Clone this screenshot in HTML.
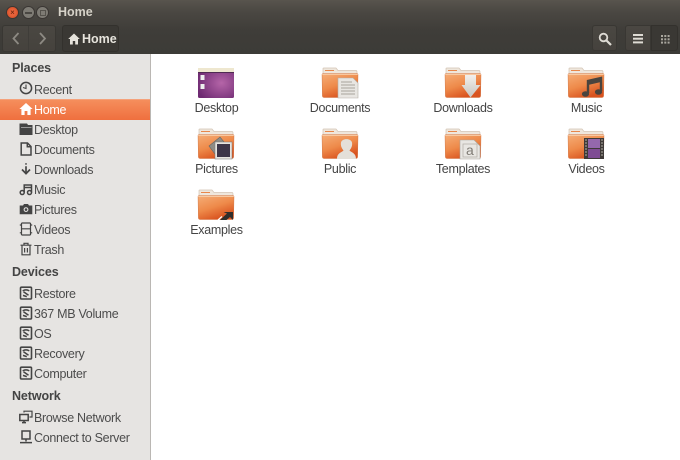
<!DOCTYPE html>
<html><head><meta charset="utf-8"><title>Home</title>
<style>
*{box-sizing:border-box}
html,body{margin:0;padding:0;width:680px;height:460px;overflow:hidden;background:#fff;font-family:"Liberation Sans",sans-serif}
#w{position:absolute;left:0;top:0;width:680px;height:460px;filter:blur(.3px);overflow:hidden}
#t{position:absolute;left:0;top:0;width:680px;height:54px;background:linear-gradient(#58544d 0,#4a4742 12px,#3f3d39 30px,#3c3b37 54px)}
.a{position:absolute}
.btn{position:absolute;border-radius:3px;border:1px solid #393733;background:linear-gradient(#4a4742,#45423d)}
#s{position:absolute;left:0;top:54px;width:151px;height:406px;background:#e6e4e2;border-right:1px solid #bab7b3}
.h{position:absolute;left:12px;font-size:12.5px;font-weight:bold;color:#444;line-height:16px;letter-spacing:-.1px}
.r{position:absolute;left:34px;font-size:12.5px;color:#4c4c4c;line-height:16px;letter-spacing:-.3px;white-space:nowrap}
.l{position:absolute;width:100px;text-align:center;font-size:12.5px;color:#444;line-height:16px;letter-spacing:-.3px}
.i{position:absolute;left:19px;width:14px;height:14px;fill:none;stroke:#444;stroke-width:1.5}
.f{position:absolute;width:38px;height:32px}
</style></head><body>
<svg width="0" height="0" style="position:absolute"><defs>
<linearGradient id="fb" x1="0" y1="0" x2=".5" y2="1"><stop offset="0" stop-color="#f5ae78"/><stop offset=".55" stop-color="#ee8a4a"/><stop offset="1" stop-color="#d9531f"/></linearGradient>
<linearGradient id="ag" x1="0" y1="0" x2="0" y2="1"><stop offset="0" stop-color="#f2f0ec"/><stop offset="1" stop-color="#c8c5bf"/></linearGradient>
<radialGradient id="dg" cx=".65" cy=".5" r=".7"><stop offset="0" stop-color="#b565a8"/><stop offset="1" stop-color="#6e2a72"/></radialGradient>
<symbol id="folder" viewBox="0 0 38 32">
<path d="M2 5V1.5Q2 1 3 1H15L17 3.5H35Q36 3.5 36 5V12H2Z" fill="#efe7dd" stroke="#d3c4b4" stroke-width=".7"/>
<rect x="4" y="3" width="9" height="1" fill="#e8874a"/>
<path d="M1 7.5Q1 6.6 2 6.6H36Q37 6.6 37 7.5L36.6 29Q36.6 30.5 35 30.5H3Q1.4 30.5 1.4 29Z" fill="url(#fb)" stroke="#cc6a36" stroke-width=".4"/>
<rect x="1.2" y="7" width="35.6" height="1" fill="#f8c8a0"/>
</symbol>
<symbol id="disk" viewBox="0 0 14 14">
<rect x="1.5" y="1.2" width="11" height="11.8" rx="1" fill="none" stroke="#444" stroke-width="1.6"/>
<path d="M4 5.2C4.5 3.4 9.5 3.4 10 5.2M4.5 5.8L9.5 9.2M4 9.4L7.8 10.6" fill="none" stroke="#444" stroke-width="1.5"/>
</symbol>
</defs></svg>

<div id="w">
<div id="t"></div>
<div class="a" style="left:6px;top:6px;width:13px;height:13px;border-radius:50%;background:radial-gradient(#e8623a 40%,#c8451f);border:1px solid #3a3633"></div>
<div class="a" style="left:10px;top:10px;width:5px;height:5px;color:#5a1d0c;font-size:8px;line-height:5px;text-align:center">×</div>
<div class="a" style="left:22px;top:6px;width:13px;height:13px;border-radius:50%;background:#7e7b74;border:1px solid #3a3633"></div>
<div class="a" style="left:25px;top:12px;width:7px;height:1.5px;background:#4a4742"></div>
<div class="a" style="left:36px;top:6px;width:13px;height:13px;border-radius:50%;background:#7e7b74;border:1px solid #3a3633"></div>
<div class="a" style="left:39.5px;top:9.5px;width:6px;height:6px;border:1px solid #55524c"></div>
<div class="a" style="left:58px;top:4px;font-size:12.5px;font-weight:bold;color:#d6d2c8;line-height:16px;letter-spacing:0">Home</div>

<div class="btn" style="left:2px;top:25px;width:54px;height:27px"></div>
<div class="a" style="left:28px;top:26px;width:1px;height:25px;background:#3f3d39"></div>
<svg class="a" style="left:2px;top:25px" width="54" height="27" fill="none" stroke="#8d8a83" stroke-width="1.8"><path d="M16.5 8L11.5 13.5L16.5 19"/><path d="M38 8L43 13.5L38 19"/></svg>
<div class="btn" style="left:62px;top:25px;width:57px;height:27px;background:#3a3834;border-color:#33312d"></div>
<svg class="a" style="left:68px;top:33px" width="12" height="12" viewBox="0 0 12 12" fill="#e6e3dc"><path d="M6 .5L11.8 6H10V11.5H7.2V8H4.8V11.5H2V6H.2Z"/></svg>
<div class="a" style="left:82px;top:31px;font-size:12.5px;font-weight:bold;color:#e6e3dc;line-height:16px;letter-spacing:0">Home</div>

<div class="btn" style="left:592px;top:25px;width:25px;height:26px"></div>
<svg class="a" style="left:598px;top:32px" width="14" height="14" fill="none" stroke="#dedbd4"><circle cx="5.5" cy="5.5" r="3.8" stroke-width="1.8"/><path d="M8.5 8.5L13 13" stroke-width="2.2"/></svg>
<div class="btn" style="left:625px;top:25px;width:26px;height:26px;border-radius:3px 0 0 3px"></div>
<div class="btn" style="left:651px;top:25px;width:27px;height:26px;background:#3a3834;border-color:#33312d;border-radius:0 3px 3px 0"></div>
<svg class="a" style="left:633px;top:34px" width="11" height="10" fill="#dedbd4"><rect width="10" height="2" y="0"/><rect width="10" height="2" y="3.7"/><rect width="10" height="2" y="7.4"/></svg>
<svg class="a" style="left:661px;top:35px" width="10" height="9" fill="#aaa79f"><rect width="2" height="2" x="0" y="0"/><rect width="2" height="2" x="3.3" y="0"/><rect width="2" height="2" x="6.6" y="0"/><rect width="2" height="2" x="0" y="3.3"/><rect width="2" height="2" x="3.3" y="3.3"/><rect width="2" height="2" x="6.6" y="3.3"/><rect width="2" height="2" x="0" y="6.6"/><rect width="2" height="2" x="3.3" y="6.6"/><rect width="2" height="2" x="6.6" y="6.6"/></svg>

<div id="s"></div>
<div class="a" style="left:0;top:99px;width:150px;height:21px;background:linear-gradient(#f58e5c,#ef6f3e);border-top:1px solid #f5a27b"></div>

<div class="h" style="top:60px">Places</div>
<svg class="i" style="top:81px" viewBox="0 0 14 14"><circle cx="7" cy="7" r="5.6"/><path d="M7 3.5V7.5L4 6.5" stroke-width="1.1"/></svg>
<div class="r" style="top:82px">Recent</div>
<svg class="i" style="top:102px;stroke:none;fill:#fff" viewBox="0 0 14 14"><path d="M7 1L13.6 7H11.6V13H8.4V9H5.6V13H2.4V7H.4Z"/></svg>
<div class="r" style="top:102px;color:#fff">Home</div>
<svg class="i" style="top:122px;stroke:none;fill:#444" viewBox="0 0 14 14"><path d="M.5 1.5H8L9 3H13.5V13H.5Z"/><rect x="2" y="5" width="10.5" height="1" fill="#999"/></svg>
<div class="r" style="top:122px">Desktop</div>
<svg class="i" style="top:142px" viewBox="0 0 14 14"><path d="M2.2 1H8.5L12 4.5V13H2.2ZM8.3 1V4.7H12"/></svg>
<div class="r" style="top:142px">Documents</div>
<svg class="i" style="top:162px" viewBox="0 0 14 14"><path d="M7 1.2V2.6M7 4.2V10.5" stroke-width="1.7"/><path d="M3 7.5L7 11.6L11 7.5" stroke-width="1.7"/></svg>
<div class="r" style="top:162px">Downloads</div>
<svg class="i" style="top:182px" viewBox="0 0 14 14"><circle cx="3.2" cy="10.5" r="2"/><circle cx="10.5" cy="10.5" r="2"/><path d="M5.2 10.5V3H12.5V10.5M5.2 5.5H12.5"/></svg>
<div class="r" style="top:182px">Music</div>
<svg class="i" style="top:202px;stroke:none;fill:#444" viewBox="0 0 14 14"><path d="M.7 3.5H4L5 2H9L10 3.5H13.3V12.2H.7Z"/><circle cx="7" cy="7.6" r="2.4" fill="#e6e4e2"/><circle cx="7" cy="7.6" r="1.3"/></svg>
<div class="r" style="top:202px">Pictures</div>
<svg class="i" style="top:222px" viewBox="0 0 14 14"><path d="M2.5 1V13M11.5 1V13M2.5 6.8H11.5M.8 3H2.5M.8 10.8H2.5M11.5 3H13.2M11.5 10.8H13.2M2.5 1H11.5M2.5 13H11.5" stroke-width="1.2"/></svg>
<div class="r" style="top:222px">Videos</div>
<svg class="i" style="top:242px" viewBox="0 0 14 14"><path d="M1.5 3.2H12.5M5 3V1.3H9V3M3 3.2V12.8H11V3.2M5.6 6V10.5M8.4 6V10.5" stroke-width="1.2"/></svg>
<div class="r" style="top:242px">Trash</div>

<div class="h" style="top:264px">Devices</div>
<svg class="i" style="top:286px"><use href="#disk"/></svg>
<div class="r" style="top:286px">Restore</div>
<svg class="i" style="top:306px"><use href="#disk"/></svg>
<div class="r" style="top:306px">367 MB Volume</div>
<svg class="i" style="top:326px"><use href="#disk"/></svg>
<div class="r" style="top:326px">OS</div>
<svg class="i" style="top:346px"><use href="#disk"/></svg>
<div class="r" style="top:346px">Recovery</div>
<svg class="i" style="top:366px"><use href="#disk"/></svg>
<div class="r" style="top:366px">Computer</div>

<div class="h" style="top:388px">Network</div>
<svg class="i" style="top:410px" viewBox="0 0 14 14"><rect x=".8" y="4.5" width="8.4" height="6" /><path d="M3 12.6H7M5 10.5V12.6" /><path d="M5 2.5V1.2H13V7H10.5" stroke-width="1.2"/></svg>
<div class="r" style="top:410px">Browse Network</div>
<svg class="i" style="top:430px" viewBox="0 0 14 14"><rect x="3" y="1" width="8" height="8"/><path d="M7 9V11.5M1 12.6H13" stroke-width="1.5"/></svg>
<div class="r" style="top:430px">Connect to Server</div>

<svg class="f" style="left:197px;top:67px" viewBox="0 0 38 32">
<rect x="1" y="1" width="36" height="30" rx="1.5" fill="url(#dg)"/>
<rect x="1" y="1" width="36" height="4.5" fill="#eee7cf"/><rect x="1" y="5" width="36" height="1" fill="#4f2a52"/>
<rect x="3.5" y="8" width="4" height="5" fill="#eee"/><rect x="3.5" y="17" width="4" height="5" fill="#eee"/>
</svg>
<div class="l" style="left:166.5px;top:100px">Desktop</div>

<svg class="f" style="left:321px;top:67px" viewBox="0 0 38 32"><use href="#folder"/>
<path d="M17 11H32L37 16V31H17Z" fill="#e8e6e2" stroke="#b5b0a8" stroke-width=".6"/>
<path d="M20 15H31M20 18H34M20 21H34M20 24H34M20 27H34" stroke="#a8a49c" stroke-width="1"/></svg>
<div class="l" style="left:290px;top:100px">Documents</div>

<svg class="f" style="left:444px;top:67px" viewBox="0 0 38 32"><use href="#folder"/>
<path d="M21 8H32V18H36.5L26.5 30.5L17.5 18H21Z" fill="url(#ag)"/></svg>
<div class="l" style="left:413px;top:100px">Downloads</div>

<svg class="f" style="left:567px;top:67px" viewBox="0 0 38 32"><use href="#folder"/>
<path d="M21 26V14L34 11V24" fill="none" stroke="#4a443e" stroke-width="2.4"/><path d="M21 14L34 11V15L21 18Z" fill="#4a443e"/>
<ellipse cx="18.5" cy="27" rx="3.6" ry="2.8" fill="#4a443e"/><ellipse cx="31.5" cy="25" rx="3.6" ry="2.8" fill="#4a443e"/></svg>
<div class="l" style="left:536.5px;top:100px">Music</div>

<svg class="f" style="left:197px;top:128px" viewBox="0 0 38 32"><use href="#folder"/>
<path d="M12 18L23 9L32 20L21 30Z" fill="#8f8c86" stroke="#666" stroke-width=".6"/>
<rect x="18" y="14" width="17" height="17" fill="#e6e3de" stroke="#777" stroke-width=".5"/>
<rect x="20" y="16" width="13" height="13" fill="#3d3548"/></svg>
<div class="l" style="left:166.5px;top:161px">Pictures</div>

<svg class="f" style="left:321px;top:128px" viewBox="0 0 38 32"><use href="#folder"/>
<path d="M16 31C16 25 20.5 24.5 22.5 22.5C20.5 20 19.5 17.5 20 14.5C21 10 30 10 31 14.5C31.5 17.5 30.5 20 28.5 22.5C30.5 24.5 35 25 35 31Z" fill="#e4e0d9"/>
</svg>
<div class="l" style="left:290px;top:161px">Public</div>

<svg class="f" style="left:444px;top:128px" viewBox="0 0 38 32"><use href="#folder"/>
<path d="M16 12H30L36 18V31H16Z" fill="#e8e6e2" stroke="#aaa69e" stroke-width=".6"/>
<rect x="19" y="16" width="14" height="13" fill="none" stroke="#b5b2aa" stroke-width=".8"/>
<text x="22" y="27" font-size="14" fill="#807c75" font-family="Liberation Sans">a</text></svg>
<div class="l" style="left:413px;top:161px">Templates</div>

<svg class="f" style="left:567px;top:128px" viewBox="0 0 38 32"><use href="#folder"/>
<rect x="17" y="10" width="20" height="21" fill="#3f3a38"/>
<rect x="21" y="11" width="12" height="9" fill="#9468ac"/><rect x="21" y="21" width="12" height="9" fill="#7f4c94"/>
<path d="M18 12h2M18 15h2M18 18h2M18 21h2M18 24h2M18 27h2M34 12h2M34 15h2M34 18h2M34 21h2M34 24h2M34 27h2" stroke="#9b968f" stroke-width="1.2"/></svg>
<div class="l" style="left:536.5px;top:161px">Videos</div>

<svg class="f" style="left:197px;top:189px" viewBox="0 0 38 32"><use href="#folder"/>
<path d="M23 31L30 24.5L26.5 23H36V31L33 28L29.5 31Z" fill="#2f2d2b"/>
<path d="M21 31L25 27.5" stroke="#fff" stroke-width="1.2"/></svg>
<div class="l" style="left:166.5px;top:222px">Examples</div>
</div>
</body></html>
